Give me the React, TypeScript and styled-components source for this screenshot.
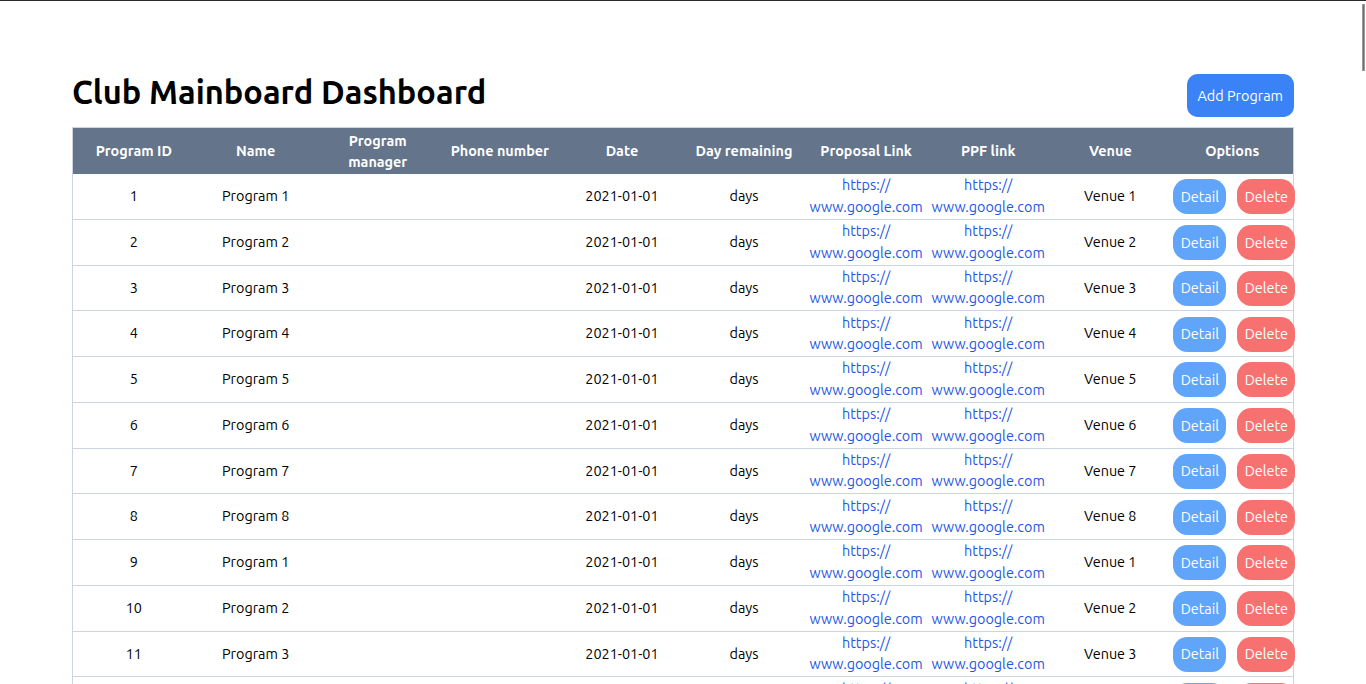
import React from "react";
import styled, { createGlobalStyle } from "styled-components";

const GlobalStyle = createGlobalStyle`
  html, body {
    margin: 0;
    padding: 0;
    background: #ffffff;
  }
  body {
    font-family: "Ubuntu", "Open Sans", "Noto Sans", sans-serif;
    font-size: 14.4px;
    color: #000000;
  }
`;

const TopEdge = styled.div`
  position: fixed;
  top: 0;
  left: 0;
  right: 0;
  height: 1px;
  background: #2b2b2b;
  z-index: 10;
`;

const ScrollThumb = styled.div`
  position: fixed;
  top: 4px;
  right: 1px;
  width: 3px;
  height: 67px;
  background: #6f6f6f;
  border: 1px solid #9a9a9a;
  box-sizing: border-box;
  z-index: 10;
`;

const Page = styled.main`
  width: 1222px;
  margin: 0 auto;
  padding-top: 74px;
`;

const TitleBar = styled.header`
  display: flex;
  align-items: flex-start;
  justify-content: space-between;
  height: 43px;
  margin-bottom: 10px;
`;

const Title = styled.h1`
  margin: 0;
  font-size: 32.6px;
  font-weight: 700;
  line-height: 36px;
  color: #000;
`;

const AddButton = styled.button`
  height: 43px;
  padding: 0 11px;
  border: none;
  border-radius: 10.8px;
  background: #3b82f6;
  color: #ffffff;
  font-family: inherit;
  font-size: 14.4px;
  cursor: pointer;
`;

const Table = styled.table`
  width: 100%;
  table-layout: fixed;
  border-collapse: collapse;
  border: 1px solid #cbd5e1;
`;

const HeadCell = styled.th`
  height: 45px;
  padding: 1px 2px 0;
  background: #64748b;
  color: #ffffff;
  font-size: 14.4px;
  font-weight: 700;
  line-height: 21px;
  text-align: center;
  vertical-align: middle;
`;

const Row = styled.tr`
  border-bottom: 1px solid #cbd5e1;
`;

const Cell = styled.td`
  height: 43.75px;
  padding: 1px 0 0;
  font-size: 14.4px;
  line-height: 21.6px;
  text-align: center;
  vertical-align: middle;
  white-space: nowrap;
`;

const LinkCell = styled(Cell)`
  white-space: normal;
`;

const Link = styled.a`
  color: #2456e6;
  text-decoration: none;
`;

const Options = styled.div`
  display: flex;
  gap: 11px;
  padding-left: 2px;
`;

const ActionButton = styled.button<{ $tone: "blue" | "red"; $w: number }>`
  flex: none;
  width: ${(p) => p.$w}px;
  height: 35px;
  padding: 0;
  border: none;
  border-radius: 14.4px;
  background: ${(p) => (p.$tone === "blue" ? "#60a5fa" : "#f87171")};
  color: #ffffff;
  font-family: inherit;
  font-size: 14.4px;
  white-space: nowrap;
  cursor: pointer;
`;

const headers = [
  "Program ID",
  "Name",
  "Program manager",
  "Phone number",
  "Date",
  "Day remaining",
  "Proposal Link",
  "PPF link",
  "Venue",
  "Options",
];

const rows = Array.from({ length: 16 }, (_, i) => ({
  id: i + 1,
  n: (i % 8) + 1,
}));

function GoogleLink() {
  return (
    <Link href="#">
      https://
      <br />
      www.google.com
    </Link>
  );
}

export default function App() {
  return (
    <>
      <GlobalStyle />
      <TopEdge />
      <ScrollThumb />
      <Page>
        <TitleBar>
          <Title>Club Mainboard Dashboard</Title>
          <AddButton>Add Program</AddButton>
        </TitleBar>
        <Table>
          <thead>
            <tr>
              {headers.map((h) => (
                <HeadCell key={h}>
                  {h === "Program manager" ? (
                    <>
                      Program
                      <br />
                      manager
                    </>
                  ) : (
                    h
                  )}
                </HeadCell>
              ))}
            </tr>
          </thead>
          <tbody>
            {rows.map((r) => (
              <Row key={r.id}>
                <Cell>{r.id}</Cell>
                <Cell>Program {r.n}</Cell>
                <Cell></Cell>
                <Cell></Cell>
                <Cell>2021-01-01</Cell>
                <Cell>days</Cell>
                <LinkCell>
                  <GoogleLink />
                </LinkCell>
                <LinkCell>
                  <GoogleLink />
                </LinkCell>
                <Cell>Venue {r.n}</Cell>
                <Cell>
                  <Options>
                    <ActionButton $tone="blue" $w={53}>
                      Detail
                    </ActionButton>
                    <ActionButton $tone="red" $w={58}>
                      Delete
                    </ActionButton>
                  </Options>
                </Cell>
              </Row>
            ))}
          </tbody>
        </Table>
      </Page>
    </>
  );
}
